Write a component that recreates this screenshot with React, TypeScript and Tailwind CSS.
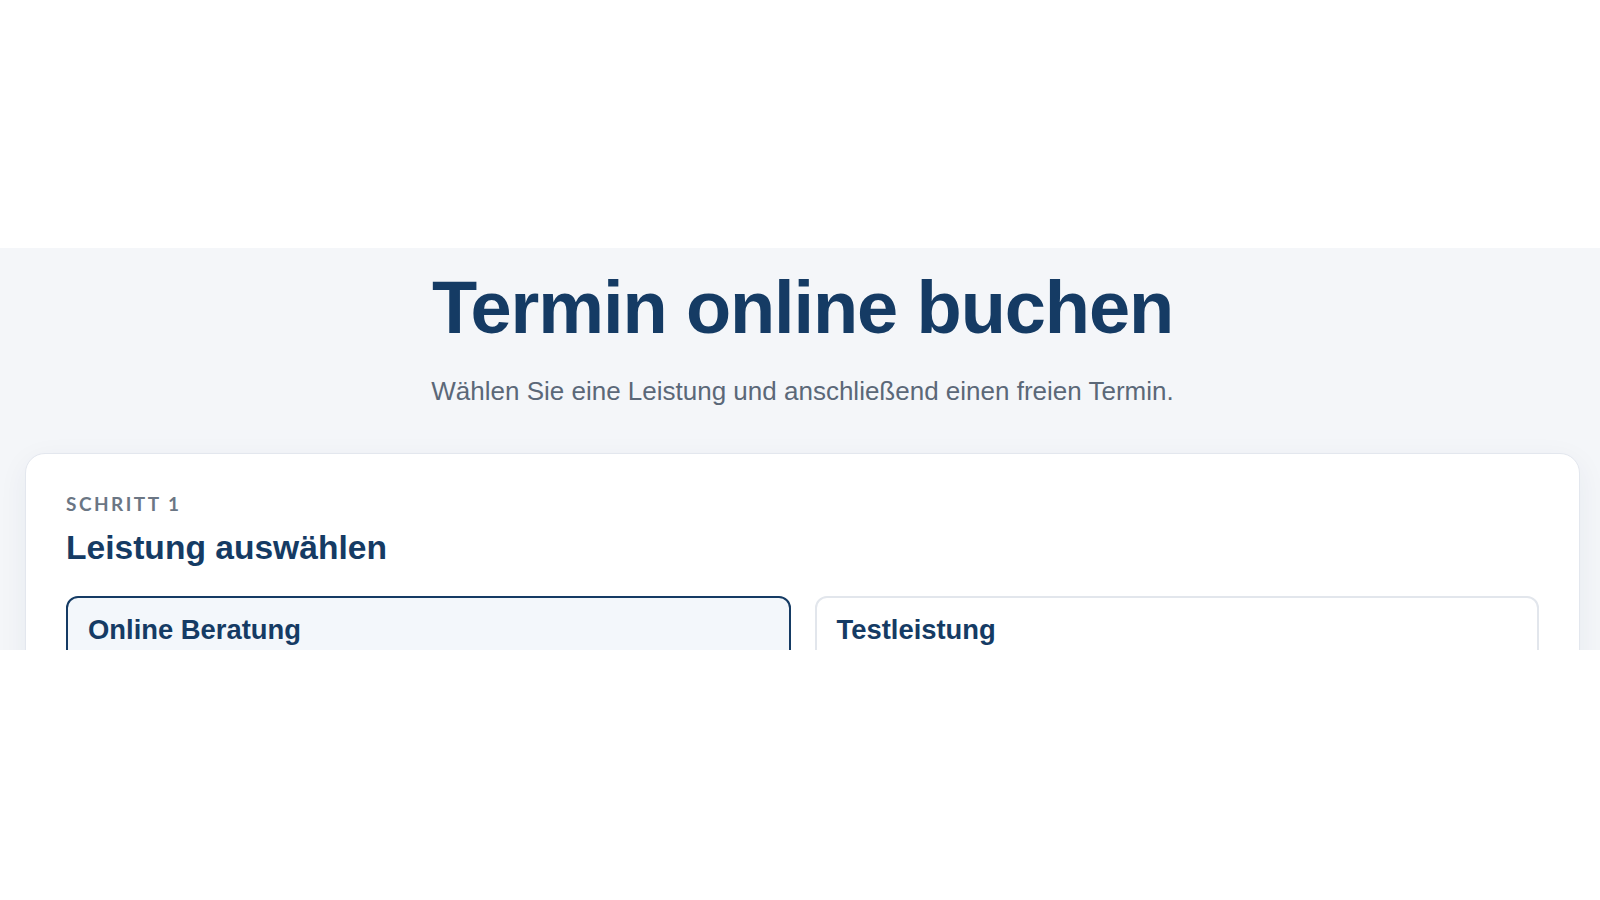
const services = [
  { id: "online", name: "Online Beratung", selected: true },
  { id: "test", name: "Testleistung", selected: false },
];

export default function App() {
  return (
    <div className="min-h-screen bg-white font-['Liberation_Sans',Arial,sans-serif]">
      <div className="h-[248px]" />
      <section className="h-[402px] overflow-hidden bg-[#f4f6f9] pl-[25px] pr-[20px] pt-[19px]">
        <h1 className="text-center text-[74px] font-bold leading-[1.1] tracking-[-0.015em] text-[#153b64]">
          Termin online buchen
        </h1>
        <p className="mt-[24px] text-center text-[26px] leading-[1.5] text-[#5b6878]">
          Wählen Sie eine Leistung und anschließend einen freien Termin.
        </p>

        <div className="mt-[42px] rounded-[20px] border border-[#e3e7ee] bg-white px-[40px] pt-[37px] pb-[40px] shadow-[0_8px_30px_rgba(20,50,90,0.06)]">
          <div className="font-['Lato',sans-serif] text-[19px] font-bold uppercase leading-[1.4] tracking-[0.13em] text-[#6b7684]">
            Schritt 1
          </div>
          <h2 className="mt-[9px] text-[33.6px] font-bold leading-[1.25] text-[#153b64]">
            Leistung auswählen
          </h2>

          <div className="mt-[27px] grid grid-cols-2 gap-[24px]">
            {services.map((s) => (
              <button
                key={s.id}
                className={`rounded-[12px] border-2 px-[20px] pt-[16px] pb-[60px] text-left ${
                  s.selected
                    ? "border-[#153b64] bg-[#f3f7fb]"
                    : "border-[#e2e6ec] bg-white"
                }`}
              >
                <div className="text-[27.4px] font-bold leading-[1.2] text-[#153b64]">
                  {s.name}
                </div>
              </button>
            ))}
          </div>
        </div>
      </section>
    </div>
  );
}
